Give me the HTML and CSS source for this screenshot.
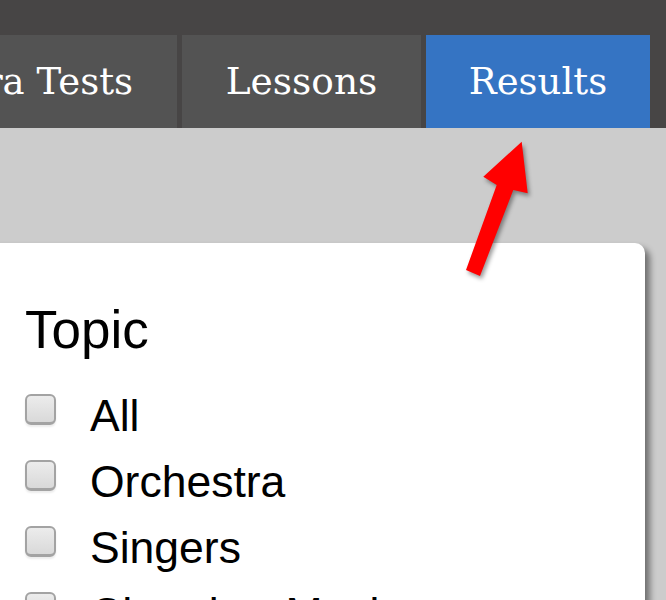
FILE: index.html
```html
<!DOCTYPE html>
<html lang="en">
<head>
<meta charset="utf-8">
<title>Results</title>
<link rel="stylesheet" href="styles.css">
</head>
<body>
<div class="page">
  <header class="header">
    <nav class="tabs">
      <div class="tab tab-first">Orchestra Tests</div>
      <div class="tab tab-lessons">Lessons</div>
      <div class="tab tab-results active">Results</div>
    </nav>
  </header>
  <main class="content">
    <section class="card">
      <h2 class="card-title">Topic</h2>
      <ul class="options">
        <li class="option"><span class="box"></span><span class="label">All</span></li>
        <li class="option"><span class="box"></span><span class="label">Orchestra</span></li>
        <li class="option"><span class="box"></span><span class="label">Singers</span></li>
        <li class="option"><span class="box"></span><span class="label">Chamber Music</span></li>
      </ul>
    </section>
  </main>
  <svg class="arrow" viewBox="0 0 90 160" width="90" height="160" aria-hidden="true">
    <polygon points="66.7,11.7 72.7,63.3 58.3,60 25,146 11,140 41.7,55 28.3,46.7" fill="#ff0000"/>
  </svg>
</div>
</body>
</html>
```
FILE: styles.css
```css
html, body {
  margin: 0;
  padding: 0;
}
body {
  width: 666px;
  height: 600px;
  overflow: hidden;
  background: #cccccc;
  font-family: "Liberation Sans", Arial, sans-serif;
}
.page {
  position: relative;
  height: 600px;
  overflow: hidden;
}
.header {
  background: #474545;
  padding-top: 35px;
  height: 93px;
}
.tabs {
  display: flex;
  gap: 5px;
  height: 93px;
}
.tab {
  flex: none;
  height: 93px;
  line-height: 93px;
  background: #535353;
  color: #ffffff;
  font-family: "DejaVu Serif", "Liberation Serif", serif;
  font-size: 37px;
  text-align: center;
  white-space: nowrap;
}
.tab-first {
  width: 377px;
  margin-left: -200px;
  text-align: right;
  padding-right: 44px;
  box-sizing: border-box;
}
.tab-lessons {
  width: 239px;
  font-size: 37.5px;
}
.tab-results {
  width: 224px;
}
.tab.active {
  background: #3574c3;
}
.content {
  padding-top: 115px;
}
.card {
  margin: 0 21px 0 -20px;
  background: #ffffff;
  border-radius: 10px;
  box-shadow: 5px 5px 6px rgba(0, 0, 0, 0.45);
  padding: 62px 0 0 45px;
  min-height: 400px;
}
.card-title {
  margin: 0;
  font-weight: normal;
  font-size: 53px;
  line-height: 50px;
  color: #000;
}
.options {
  list-style: none;
  margin: 28px 0 0 0;
  padding: 0;
}
.option {
  display: flex;
  align-items: flex-start;
  height: 66px;
}
.box {
  flex: none;
  box-sizing: border-box;
  width: 31px;
  height: 31px;
  margin-top: 11px;
  border: 2px solid #a3a3a3;
  border-bottom-width: 3px;
  border-radius: 6px;
  background: linear-gradient(#ececec, #d9d9d9);
  box-shadow: 0 2px 2px rgba(0, 0, 0, 0.08);
}
.label {
  margin-left: 34px;
  font-size: 44.5px;
  line-height: 66px;
  color: #000;
  white-space: nowrap;
}
.arrow {
  position: absolute;
  left: 455px;
  top: 130px;
  overflow: visible;
  filter: drop-shadow(2px 3px 2px rgba(0, 0, 0, 0.4));
}
```
